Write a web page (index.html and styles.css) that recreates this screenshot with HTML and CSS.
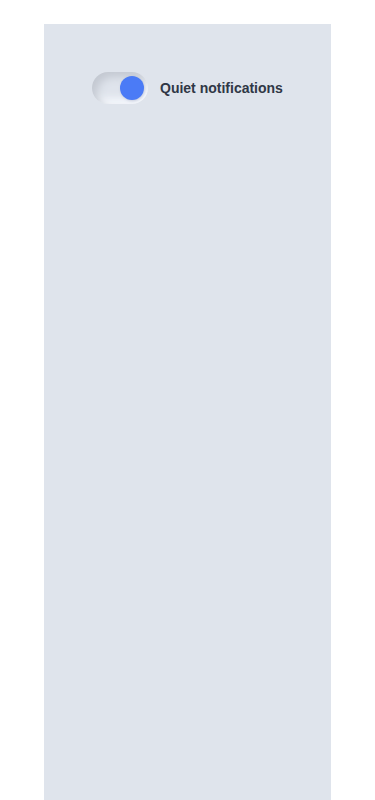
FILE: index.html
```html
<!DOCTYPE html>
<html>
<head>
<meta charset="utf-8">
<link rel="stylesheet" href="styles.css">
</head>
<body>
<div class="panel">
  <label class="row">
    <span class="track"><span class="knob"></span></span>
    <span class="label">Quiet notifications</span>
  </label>
</div>
</body>
</html>
```
FILE: styles.css
```css
html, body { margin: 0; padding: 0; background: #ffffff; }
body { font-family: "Liberation Sans", Arial, sans-serif; }
.panel {
  margin: 24px 0 0 44px;
  width: 287px;
  min-height: 776px;
  background: #dfe4ec;
  padding: 48px;
  box-sizing: border-box;
}
.row { display: flex; align-items: center; gap: 12px; }
.track {
  width: 56px;
  height: 32px;
  border-radius: 16px;
  background: #dfe4ec;
  box-shadow: inset 5px 5px 9px #c3c8d1, inset -5px -5px 9px #f9fbff;
  display: flex;
  align-items: center;
  justify-content: flex-end;
  padding: 0 4px;
  box-sizing: border-box;
  flex: none;
}
.knob {
  width: 24px; height: 24px; border-radius: 50%;
  background: #4b7bf6;
  box-shadow: 1px 1px 3px rgba(60,80,130,0.25);
}
.label { font-size: 14px; font-weight: bold; color: #2f3746; }
```
